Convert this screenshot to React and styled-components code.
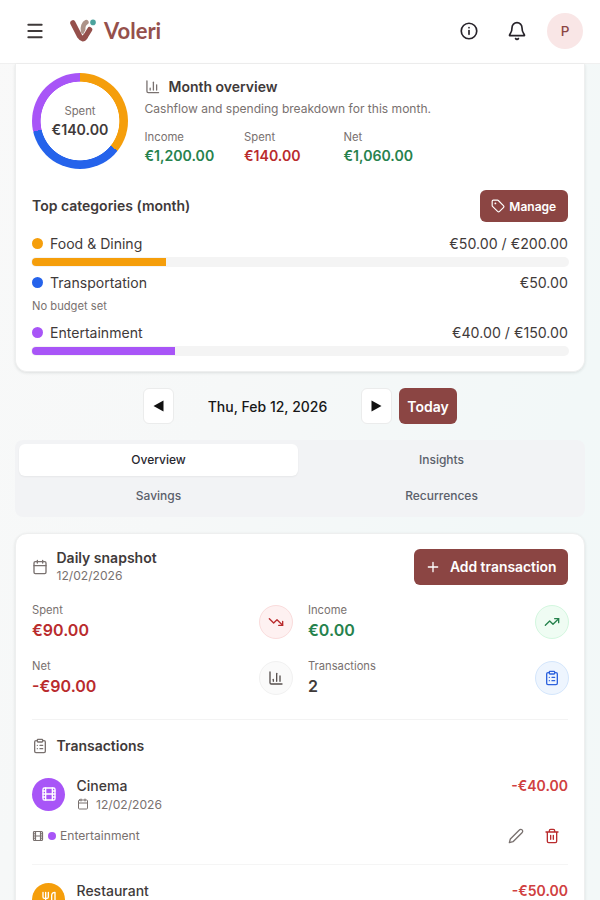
import React from "react";
import styled, { createGlobalStyle } from "styled-components";

const Global = createGlobalStyle`
  * { box-sizing: border-box; }
  html, body { margin: 0; height: 900px; overflow: hidden; }
  body { font-family: Inter, "Liberation Sans", sans-serif; color: #3f3a3a; background: #f7f8f8; }
  button { font-family: inherit; padding: 0; border: 0; background: none; }
`;

const Page = styled.div`
  width: 600px;
  height: 900px;
  overflow: hidden;
  display: flex;
  flex-direction: column;
  background: linear-gradient(115deg, #f9f9f9 0%, #f6f8f8 40%, #f2f8f8 75%, #f3f8f8 100%);
`;

const Header = styled.header`
  flex: none;
  height: 64px;
  display: flex;
  align-items: center;
  padding: 0 17px 2px 25px;
  background: #fff;
  border-bottom: 1px solid #f0f0f0;
`;

const Brand = styled.div`
  display: flex;
  align-items: center;
  gap: 8px;
  margin-left: 25px;
  flex: 1;
`;

const BrandName = styled.span`
  font: 700 22px/28px Lato, sans-serif;
  color: #95504c;
`;

const HeaderIcons = styled.div`
  display: flex;
  align-items: center;
  gap: 28px;
  margin-right: 20px;
  color: #27232a;
`;

const Avatar = styled.div`
  width: 36px;
  height: 36px;
  border-radius: 50%;
  background: #f9e6e6;
  color: #8b4543;
  display: grid;
  place-items: center;
  font-size: 13.5px;
  font-weight: 500;
`;

const Icon = styled.svg`
  display: block;
  flex: none;
  fill: none;
  stroke: currentColor;
  stroke-linecap: round;
  stroke-linejoin: round;
`;

const Card = styled.section`
  flex: none;
  margin: 0 15px;
  padding: 0 16px;
  background: #fff;
  border: 1px solid #eeefef;
  border-radius: ${(p) => (p.$joined ? "0 0 12px 12px" : "12px")};
  border-top-width: ${(p) => (p.$joined ? 0 : "1px")};
  box-shadow: 0 1px 3px rgba(30, 50, 50, 0.12);
`;

const Text = styled.div`
  font-size: ${(p) => p.$size}px;
  line-height: ${(p) => p.$line || 20}px;
  font-weight: ${(p) => p.$weight || 400};
  color: ${(p) => p.$color || "#3f3a3a"};
  white-space: nowrap;
`;

const Summary = styled.div`
  display: flex;
  gap: 16.5px;
  height: 125.5px;
  padding-top: 9px;
`;

const Donut = styled.div`
  flex: none;
  width: 96px;
  height: 96px;
  display: grid;
  place-items: center;
  border-radius: 50%;
  background:
    radial-gradient(circle, #fff 39px, transparent 39.7px),
    conic-gradient(#f59e0b 0 128.6deg, #2563eb 128.6deg 257.2deg, #a855f7 257.2deg);
`;

const Centered = styled.div`
  padding-bottom: 1px;
  text-align: center;
`;

const SummaryBody = styled.div`
  padding-top: 4px;
`;

const TitleRow = styled.div`
  display: flex;
  align-items: center;
  gap: 8.5px;
  color: #79716f;
`;

const Metrics = styled.div`
  display: grid;
  grid-template-columns: repeat(3, 99.5px);
  margin-top: 8px;
`;

const SectionHead = styled.div`
  display: flex;
  align-items: center;
  justify-content: space-between;
  height: 33px;
`;

const PrimaryButton = styled.button`
  display: flex;
  align-items: center;
  justify-content: center;
  gap: ${(p) => p.$gap || 0}px;
  width: ${(p) => p.$w}px;
  height: ${(p) => p.$h}px;
  border-radius: 6px;
  background: #8b4543;
  color: #fff;
  font-size: ${(p) => p.$size}px;
  font-weight: 600;
  white-space: nowrap;
`;

const Categories = styled.div`
  padding-top: 11px;
  height: 148.5px;
`;

const CategoryRow = styled.div`
  display: flex;
  align-items: center;
  height: 20px;
  margin-top: ${(p) => p.$top || 0}px;
`;

const Dot = styled.i`
  flex: none;
  width: ${(p) => p.$size}px;
  height: ${(p) => p.$size}px;
  margin-right: ${(p) => p.$gap}px;
  margin-left: ${(p) => p.$before || 0}px;
  border-radius: 50%;
  background: ${(p) => p.$color};
`;

const Grow = styled.div`
  flex: 1;
  min-width: 0;
`;

const Track = styled.div`
  height: 10px;
  margin: 3px -1px 0 -1px;
  padding: 1px;
  border-radius: 5px;
  background: #f4f4f4;
  overflow: hidden;
`;

const Fill = styled.div`
  width: ${(p) => p.$pct}%;
  height: 8px;
  border-radius: 4px 0 0 4px;
  background: ${(p) => p.$color};
`;

const DayNav = styled.nav`
  display: flex;
  justify-content: center;
  align-items: center;
  height: 36px;
  margin: 16px 0;
`;

const ArrowButton = styled.button`
  width: 31px;
  height: 36px;
  display: grid;
  place-items: center;
  background: #fff;
  border: 1px solid #ebecec;
  border-radius: 6px;
  color: #111;
`;

const DayLabel = styled.div`
  width: 187px;
  text-align: center;
  font-size: 14px;
  font-weight: 500;
  color: #171717;
`;

const TodaySlot = styled.div`
  margin-left: 7px;
`;

const Tabs = styled.div`
  flex: none;
  display: grid;
  grid-template-columns: 279px 1fr;
  grid-template-rows: 32px 32px;
  row-gap: 4px;
  column-gap: 4px;
  height: 77px;
  margin: 0 15px 16px 15px;
  padding: 4px;
  border-radius: 8px;
  background: #f2f3f5;
`;

const Tab = styled.div`
  display: grid;
  place-items: center;
  padding-bottom: 1px;
  border-radius: 6px;
  font-size: 12px;
  font-weight: 500;
  color: ${(p) => (p.$active ? "#27272f" : "#5b606b")};
  background: ${(p) => (p.$active ? "#fff" : "transparent")};
  box-shadow: ${(p) => (p.$active ? "0 1px 2px rgba(0,0,0,0.05)" : "none")};
`;

const SnapshotHead = styled.div`
  display: flex;
  align-items: center;
  justify-content: space-between;
  margin-top: 15px;
  height: 36px;
`;

const TitleGroup = styled.div`
  display: flex;
  align-items: center;
  gap: 8.5px;
  color: #79716f;
`;

const Stats = styled.div`
  display: grid;
  grid-template-columns: 261px 261px;
  grid-template-rows: 56px 56px;
  column-gap: 15px;
  margin-top: 15px;
  height: 120px;
  border-bottom: 1px solid #f3f3f3;
`;

const Stat = styled.div`
  display: flex;
  justify-content: space-between;
`;

const Bubble = styled.div`
  width: 34px;
  height: 34px;
  margin-top: 5px;
  border-radius: 50%;
  display: grid;
  place-items: center;
  color: ${(p) => p.$fg};
  background: ${(p) => p.$bg};
  border: 1px solid ${(p) => p.$line};
`;

const ListTitle = styled.div`
  display: flex;
  align-items: center;
  gap: 8.5px;
  height: 20px;
  margin: 16px 0 3.5px;
  color: #79716f;
`;

const Transaction = styled.article`
  height: 105px;
  padding-top: 18px;
  border-bottom: 1px solid #f5f5f5;
`;

const TransactionMain = styled.div`
  display: flex;
  gap: 11.5px;
  height: 45px;
`;

const TransactionText = styled(Grow)`
  margin-top: -1px;
`;

const CategoryBadge = styled.div`
  flex: none;
  width: 33px;
  height: 33px;
  border-radius: 50%;
  display: grid;
  place-items: center;
  color: #fff;
  background: ${(p) => p.$color};
`;

const Meta = styled.div`
  display: flex;
  align-items: center;
  gap: 7.5px;
  color: #79716f;
`;

const TransactionFoot = styled.div`
  display: flex;
  align-items: center;
  height: 26px;
  color: #79716f;
`;

const Actions = styled.div`
  display: flex;
  align-items: center;
  gap: 20px;
  margin-left: auto;
  margin-right: 8px;
`;

const Danger = styled.span`
  color: #b92b2d;
`;

const paths = {
  chart: <><path d="M3 3v16a2 2 0 0 0 2 2h16" /><path d="M18 17V9" /><path d="M13 17V5" /><path d="M8 17v-3" /></>,
  info: <><circle cx="12" cy="12" r="9.3" /><path d="M12 16v-4.500" /><path d="M12 8h.01" /></>,
  bell: <><path d="M6 8a6 6 0 0 1 12 0c0 7 3 6.500 3 9.500H3C3 14.500 6 15 6 8" /><path d="M10.300 21a1.940 1.940 0 0 0 3.400 0" /></>,
  tag: <><path d="M12.586 2.586A2 2 0 0 0 11.172 2H4a2 2 0 0 0-2 2v7.172a2 2 0 0 0 .586 1.414l8.704 8.704a2.426 2.426 0 0 0 3.420 0l6.580-6.580a2.426 2.426 0 0 0 0-3.420z" /><circle cx="7.500" cy="7.500" r=".6" fill="currentColor" /></>,
  calendar: <><path d="M8 2v4M16 2v4M3 10h18" /><rect x="3" y="4" width="18" height="18" rx="2" /></>,
  plus: <path d="M5 12h14M12 5v14" />,
  down: <><path d="M16 17h6v-6" /><path d="m22 17-8.500-8.500-5 5L2 7" /></>,
  up: <><path d="M16 7h6v6" /><path d="m22 7-8.500 8.500-5-5L2 17" /></>,
  list: <><rect x="8" y="2" width="8" height="4" rx="1" /><path d="M16 4h2a2 2 0 0 1 2 2v14a2 2 0 0 1-2 2H6a2 2 0 0 1-2-2V6a2 2 0 0 1 2-2h2M12 11h4M12 16h4M8 11h.01M8 16h.01" /></>,
  film: <><rect x="3" y="3" width="18" height="18" rx="2" /><path d="M7 3v18M17 3v18M3 7.500h4M3 12h18M3 16.500h4M17 7.500h4M17 16.500h4" /></>,
  pencil: <path d="M17 3a2.850 2.830 0 1 1 4 4L7.500 20.500 2 22l1.500-5.500Z" />,
  trash: <path d="M3 6h18M19 6v14a2 2 0 0 1-2 2H7a2 2 0 0 1-2-2V6M8 6V4a2 2 0 0 1 2-2h4a2 2 0 0 1 2 2v2M10 11v6M14 11v6" />,
  utensils: <path d="M3 2v7c0 1.100.9 2 2 2h4a2 2 0 0 0 2-2V2M7 2v20M21 15V2a5 5 0 0 0-5 5v6c0 1.100.9 2 2 2h3Zm0 0v7" />,
  menu: <path d="M4 4.500h16M4 12h16M4 19.500h16" />,
};

const Glyph = ({ name, size, stroke = 2 }) => (
  <Icon width={size} height={size} viewBox="0 0 24 24" strokeWidth={stroke}>{paths[name]}</Icon>
);

const Logo = () => (
  <Icon width="26" height="24" viewBox="0 0 26 24">
    <path d="M13.200 12.500 C12.300 8 14 4.200 16.300 3.200" stroke="#ad9389" strokeWidth="4.800" />
    <path d="M2.900 3.900 9.800 17.400Q12.700 22 15.200 17.600" stroke="#95504c" strokeWidth="5.400" />
    <path d="M19.800 10.600 17.300 14.600" stroke="#fff" strokeWidth="6.800" />
    <path d="M19.700 10.600 15.200 17.800" stroke="#95504c" strokeWidth="5.200" />
    <circle cx="23" cy="3.400" r="2.800" fill="#4ba39d" stroke="none" />
  </Icon>
);

const Arrow = ({ right }) => (
  <svg width="11" height="12" viewBox="0 0 11 12">
    <path d={right ? "M0.500 0.500 10.500 6 0.500 11.500Z" : "M10.500 0.500 0.500 6 10.500 11.500Z"} fill="currentColor" />
  </svg>
);

const muted = "#79716f";
const red = "#b92b2d";
const green = "#26824d";

const metrics = [
  ["Income", "€1,200.00", green],
  ["Spent", "€140.00", red],
  ["Net", "€1,060.00", green],
];

const stats = [
  ["Spent", "€90.00", red, "down", red, "#fef1f1", "#fadcdc"],
  ["Income", "€0.00", green, "up", green, "#effcf3", "#d3f7df"],
  ["Net", "-€90.00", red, "chart", "#57504e", "#fafafa", "#f1f1f1"],
  ["Transactions", "2", "#3f3a3a", "list", "#2d62dd", "#eef5fe", "#d4e6fc"],
];

const Category = ({ name, amount, color, top }) => (
  <CategoryRow $top={top}>
    <Dot $size={11} $gap={7} $color={color} />
    <Grow><Text $size={14.05}>{name}</Text></Grow>
    <Text $size={14.2}>{amount}</Text>
  </CategoryRow>
);

const Entry = ({ title, amount, icon, color, category, date }) => (
  <Transaction>
    <TransactionMain>
      <CategoryBadge $color={color}><Glyph name={icon} size={16} /></CategoryBadge>
      <TransactionText>
        <Text $size={14} $line={18} $weight={500}>{title}</Text>
        {date && (
          <Meta>
            <Glyph name="calendar" size={12} />
            <Text $size={12.1} $line={19} $color={muted}>{date}</Text>
          </Meta>
        )}
      </TransactionText>
      <Text $size={14} $line={16} $weight={600} $color="#d04040">{amount}</Text>
    </TransactionMain>
    {category && (
      <TransactionFoot>
        <Glyph name={icon} size={12} stroke={2.4} />
        <Dot $size={8} $gap={4} $before={4} $color={color} />
        <Text $size={12.1} $color={muted}>{category}</Text>
        <Actions>
          <Glyph name="pencil" size={16} />
          <Danger><Glyph name="trash" size={16} /></Danger>
        </Actions>
      </TransactionFoot>
    )}
  </Transaction>
);

export default function App() {
  return (
    <>
      <Global />
      <Page>
        <Header>
          <Glyph name="menu" size={20} stroke={2.4} />
          <Brand><Logo /><BrandName>Voleri</BrandName></Brand>
          <HeaderIcons>
            <Glyph name="info" size={20} />
            <Glyph name="bell" size={20} />
          </HeaderIcons>
          <Avatar>P</Avatar>
        </Header>

        <Card $joined>
          <Summary>
            <Donut>
              <Centered>
                <Text $size={11.3} $line={18} $color={muted}>Spent</Text>
                <Text $size={14.2} $line={19} $weight={600}>€140.00</Text>
              </Centered>
            </Donut>
            <SummaryBody>
              <TitleRow>
                <Glyph name="chart" size={15.5} />
                <Text $size={14} $weight={600}>Month overview</Text>
              </TitleRow>
              <Text $size={12.05} $line={23} $color={muted}>Cashflow and spending breakdown for this month.</Text>
              <Metrics>
                {metrics.map(([label, value, color]) => (
                  <div key={label}>
                    <Text $size={11.3} $line={18} $color={muted}>{label}</Text>
                    <Text $size={14.1} $line={20} $weight={600} $color={color}>{value}</Text>
                  </div>
                ))}
              </Metrics>
            </SummaryBody>
          </Summary>
          <SectionHead>
            <Text $size={14} $weight={600}>Top categories (month)</Text>
            <PrimaryButton $w={88.5} $h={32} $size={12} $gap={4}>
              <Glyph name="tag" size={14} />Manage
            </PrimaryButton>
          </SectionHead>
          <Categories>
            <Category name="Food & Dining" amount="€50.00 / €200.00" color="#f59e0b" />
            <Track><Fill $pct={25} $color="#f59e0b" /></Track>
            <Category name="Transportation" amount="€50.00" color="#2563eb" top={6} />
            <Text $size={11.2} $line={26} $color={muted}>No budget set</Text>
            <Category name="Entertainment" amount="€40.00 / €150.00" color="#a855f7" top={4} />
            <Track><Fill $pct={26.6} $color="#a855f7" /></Track>
          </Categories>
        </Card>

        <DayNav>
          <ArrowButton><Arrow /></ArrowButton>
          <DayLabel>Thu, Feb 12, 2026</DayLabel>
          <ArrowButton><Arrow right /></ArrowButton>
          <TodaySlot><PrimaryButton $w={58} $h={36} $size={14}>Today</PrimaryButton></TodaySlot>
        </DayNav>

        <Tabs>
          <Tab $active>Overview</Tab>
          <Tab>Insights</Tab>
          <Tab>Savings</Tab>
          <Tab>Recurrences</Tab>
        </Tabs>

        <Card>
          <SnapshotHead>
            <TitleGroup>
              <Glyph name="calendar" size={16} />
              <div>
                <Text $size={14} $line={18} $weight={600}>Daily snapshot</Text>
                <Text $size={12.1} $line={18} $color={muted}>12/02/2026</Text>
              </div>
            </TitleGroup>
            <PrimaryButton $w={154.5} $h={36} $size={13.9} $gap={9}>
              <Glyph name="plus" size={16} />Add transaction
            </PrimaryButton>
          </SnapshotHead>
          <Stats>
            {stats.map(([label, value, color, icon, fg, bg, line]) => (
              <Stat key={label}>
                <div>
                  <Text $size={11.2} $line={20} $color={muted}>{label}</Text>
                  <Text $size={16} $line={21} $weight={600} $color={color}>{value}</Text>
                </div>
                <Bubble $fg={fg} $bg={bg} $line={line}><Glyph name={icon} size={16} /></Bubble>
              </Stat>
            ))}
          </Stats>
          <ListTitle>
            <Glyph name="list" size={16} />
            <Text $size={14} $weight={600}>Transactions</Text>
          </ListTitle>
          <Entry title="Cinema" amount="-€40.00" icon="film" color="#a855f7" category="Entertainment" date="12/02/2026" />
          <Entry title="Restaurant" amount="-€50.00" icon="utensils" color="#f59e0b" />
        </Card>
      </Page>
    </>
  );
}
